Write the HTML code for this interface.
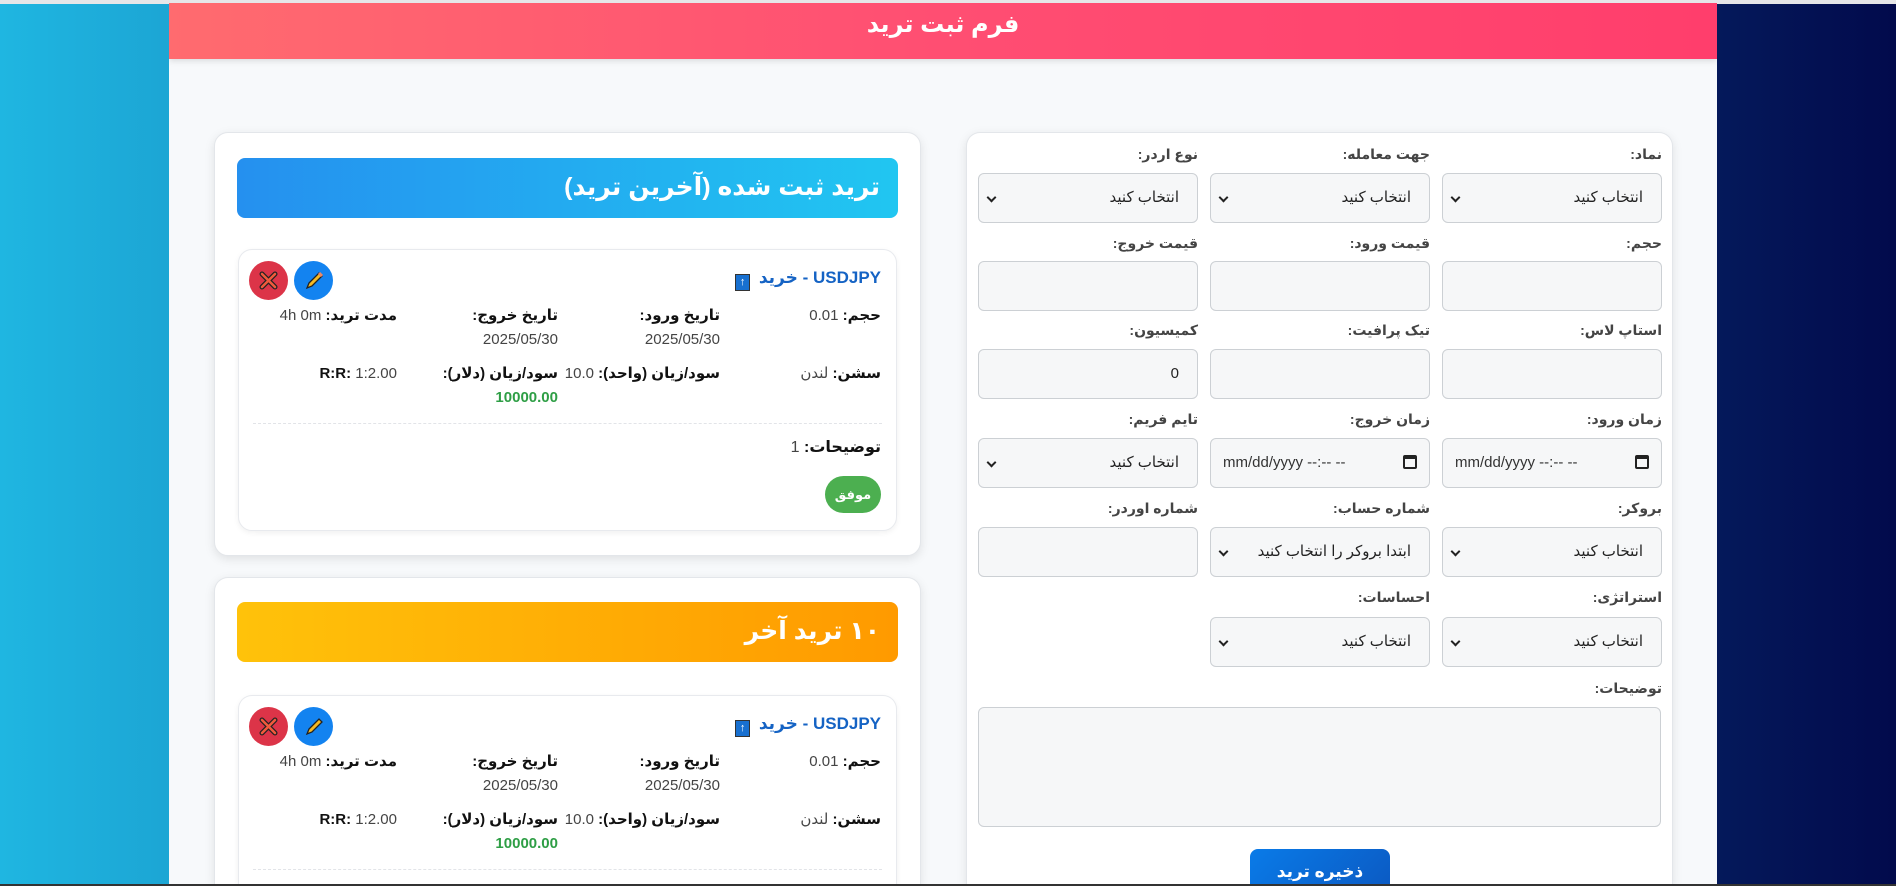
<!DOCTYPE html>
<html><head><meta charset="utf-8">
<style>
*{box-sizing:border-box;margin:0;padding:0}
html{width:1896px;height:886px;overflow:hidden}
body{width:1896px;height:886px;overflow:hidden;position:relative;background:linear-gradient(90deg,#1fb6e1 0%,#0f5a99 50%,#020a4c 100%);font-family:"Liberation Sans","DejaVu Sans",sans-serif;color:#333}
.top{position:absolute;left:0;top:0;width:1896px;height:4px;background:#e6e6e8}
.main{position:absolute;left:169px;top:3px;width:1548px;height:881px;background:#f7f9fb;overflow:hidden}
.hdr{position:absolute;left:0;top:0;width:1548px;height:56px;background:linear-gradient(90deg,#ff6b6f,#ff4e72,#ff3e6c);box-shadow:0 2px 6px rgba(0,0,0,.12);text-align:center;color:#fff;font-weight:bold;font-size:24px;line-height:44px;direction:rtl}
.card{position:absolute;background:#fff;border:1px solid #e3e6ea;border-radius:14px;box-shadow:0 3px 10px rgba(0,0,0,.10);overflow:hidden}
.open{border-bottom:none;border-radius:14px 14px 0 0}
.ch{position:absolute;left:22px;width:661px;height:60px;border-radius:8px;color:#fff;font-weight:bold;font-size:25px;direction:rtl;padding-right:18px;line-height:58px}
.tc{position:absolute;left:23px;width:659px;background:#fff;border:1px solid #e8eaee;border-radius:14px;box-shadow:0 2px 6px rgba(0,0,0,.06);direction:rtl}
.tt{position:absolute;right:15px;top:18px;font-size:17px;font-weight:bold;color:#1563c4}
.tt .ar{display:inline-block;width:15px;height:17px;background:#1870d0;border:1px solid #333;color:#fff;font-size:11px;text-align:center;line-height:15px;margin-right:4px;vertical-align:-2px}
.cell{position:absolute;width:160px;font-size:15px;color:#444;line-height:24px;text-align:right}
.cell b{color:#111}
.g{color:#2e9e45;font-weight:bold}
.btn{position:absolute;top:11px;width:39px;height:39px;border-radius:50%}
.dash{position:absolute;left:14px;right:14px;border-top:1px dashed #e2e4e8}
.badge{position:absolute;right:15px;width:56px;height:37px;border-radius:19px;background:#4caf50;color:#fff;font-weight:bold;font-size:13px;text-align:center;line-height:37px}
.lbl{position:absolute;width:220px;text-align:right;direction:rtl;font-size:14px;font-weight:bold;color:#444}
.inp{position:absolute;width:220px;height:50px;background:#f6f7f8;border:1px solid #ccd0d4;border-radius:6px;direction:rtl;font-size:15px;color:#222;line-height:48px;padding-right:18px}
.sel::after{content:"";position:absolute;left:9px;top:20px;width:5px;height:5px;border-right:2px solid #222;border-bottom:2px solid #222;transform:rotate(45deg)}
.dt{direction:ltr;text-align:left;padding-left:12px;color:#333}
.dt i{position:absolute;right:12px;top:16px;width:14px;height:14px;border:2px solid #222;border-radius:2px;border-top-width:4px}
</style></head><body>
<div class="top"></div>
<div class="main">
<div class="hdr">فرم ثبت ترید</div>

<div class="card" style="left:45px;top:129px;width:707px;height:424px">
 <div class="ch" style="top:25px;background:linear-gradient(90deg,#2590ef,#21c6f1)">ترید ثبت شده (آخرین ترید)</div>
 <div class="tc" style="top:116px;height:282px">
  <div class="tt">USDJPY - خرید <span class="ar">↑</span></div>
  <div class="btn" style="left:55px;background:#1383f0"><svg width="39" height="39"><path d="M13 27 L15 22 L25 12 L28 15 L18 25 Z" fill="#f5b922" stroke="#222" stroke-width="1.3"/><path d="M25 12 L28 15" stroke="#e86" stroke-width="3"/></svg></div>
  <div class="btn" style="left:10px;background:#dc3448"><svg width="39" height="39"><path d="M13 13 L26 26 M26 13 L13 26" stroke="#222" stroke-width="5" stroke-linecap="round"/><path d="M13 13 L26 26 M26 13 L13 26" stroke="#f05a3c" stroke-width="2.6" stroke-linecap="round"/></svg></div>
  <div class="cell" style="right:15px;top:54px"><b>حجم:</b> 0.01</div>
  <div class="cell" style="right:176px;top:54px"><b>تاریخ ورود:</b><br>2025/05/30</div>
  <div class="cell" style="right:338px;top:54px"><b>تاریخ خروج:</b><br>2025/05/30</div>
  <div class="cell" style="right:499px;top:54px"><b>مدت ترید:</b> 4h 0m</div>
  <div class="cell" style="right:15px;top:112px"><b>سشن:</b> لندن</div>
  <div class="cell" style="right:176px;top:112px"><b>سود/زیان (واحد):</b> 10.0</div>
  <div class="cell" style="right:338px;top:112px"><b>سود/زیان (دلار):</b><br><span class="g">10000.00</span></div>
  <div class="cell" style="right:499px;top:112px"><b>R:R:</b> 1:2.00</div>
  <div class="dash" style="top:173px"></div>
  <div class="cell" style="right:15px;top:186px;font-size:16px;width:200px"><b>توضیحات:</b> 1</div>
  <div class="badge" style="top:226px">موفق</div>
 </div>
</div>

<div class="card open" style="left:45px;top:574px;width:707px;height:307px">
 <div class="ch" style="top:24px;background:linear-gradient(90deg,#ffc20a,#ff9a00)">۱۰ ترید آخر</div>
 <div class="tc" style="top:117px;height:190px;border-bottom:none;border-radius:14px 14px 0 0">
  <div class="tt">USDJPY - خرید <span class="ar">↑</span></div>
  <div class="btn" style="left:55px;background:#1383f0"><svg width="39" height="39"><path d="M13 27 L15 22 L25 12 L28 15 L18 25 Z" fill="#f5b922" stroke="#222" stroke-width="1.3"/></svg></div>
  <div class="btn" style="left:10px;background:#dc3448"><svg width="39" height="39"><path d="M13 13 L26 26 M26 13 L13 26" stroke="#222" stroke-width="5" stroke-linecap="round"/><path d="M13 13 L26 26 M26 13 L13 26" stroke="#f05a3c" stroke-width="2.6" stroke-linecap="round"/></svg></div>
  <div class="cell" style="right:15px;top:54px"><b>حجم:</b> 0.01</div>
  <div class="cell" style="right:176px;top:54px"><b>تاریخ ورود:</b><br>2025/05/30</div>
  <div class="cell" style="right:338px;top:54px"><b>تاریخ خروج:</b><br>2025/05/30</div>
  <div class="cell" style="right:499px;top:54px"><b>مدت ترید:</b> 4h 0m</div>
  <div class="cell" style="right:15px;top:112px"><b>سشن:</b> لندن</div>
  <div class="cell" style="right:176px;top:112px"><b>سود/زیان (واحد):</b> 10.0</div>
  <div class="cell" style="right:338px;top:112px"><b>سود/زیان (دلار):</b><br><span class="g">10000.00</span></div>
  <div class="cell" style="right:499px;top:112px"><b>R:R:</b> 1:2.00</div>
  <div class="dash" style="top:173px"></div>
 </div>
</div>

<div class="card open" style="left:797px;top:129px;width:707px;height:752px"></div>
</div>

<div class="lbl" style="left:1442px;top:146px">نماد:</div>
<div class="lbl" style="left:1210px;top:146px">جهت معامله:</div>
<div class="lbl" style="left:978px;top:146px">نوع اردر:</div>
<div class="inp sel" style="left:1442px;top:173px">انتخاب کنید</div>
<div class="inp sel" style="left:1210px;top:173px">انتخاب کنید</div>
<div class="inp sel" style="left:978px;top:173px">انتخاب کنید</div>

<div class="lbl" style="left:1442px;top:235px">حجم:</div>
<div class="lbl" style="left:1210px;top:235px">قیمت ورود:</div>
<div class="lbl" style="left:978px;top:235px">قیمت خروج:</div>
<div class="inp" style="left:1442px;top:261px"></div>
<div class="inp" style="left:1210px;top:261px"></div>
<div class="inp" style="left:978px;top:261px"></div>

<div class="lbl" style="left:1442px;top:322px">استاپ لاس:</div>
<div class="lbl" style="left:1210px;top:322px">تیک پرافیت:</div>
<div class="lbl" style="left:978px;top:322px">کمیسیون:</div>
<div class="inp" style="left:1442px;top:349px"></div>
<div class="inp" style="left:1210px;top:349px"></div>
<div class="inp" style="left:978px;top:349px">0</div>

<div class="lbl" style="left:1442px;top:411px">زمان ورود:</div>
<div class="lbl" style="left:1210px;top:411px">زمان خروج:</div>
<div class="lbl" style="left:978px;top:411px">تایم فریم:</div>
<div class="inp dt" style="left:1442px;top:438px">mm/dd/yyyy --:-- --<i></i></div>
<div class="inp dt" style="left:1210px;top:438px">mm/dd/yyyy --:-- --<i></i></div>
<div class="inp sel" style="left:978px;top:438px">انتخاب کنید</div>

<div class="lbl" style="left:1442px;top:500px">بروکر:</div>
<div class="lbl" style="left:1210px;top:500px">شماره حساب:</div>
<div class="lbl" style="left:978px;top:500px">شماره اوردر:</div>
<div class="inp sel" style="left:1442px;top:527px">انتخاب کنید</div>
<div class="inp sel" style="left:1210px;top:527px">ابتدا بروکر را انتخاب کنید</div>
<div class="inp" style="left:978px;top:527px"></div>

<div class="lbl" style="left:1442px;top:589px">استراتژی:</div>
<div class="lbl" style="left:1210px;top:589px">احساسات:</div>
<div class="inp sel" style="left:1442px;top:617px">انتخاب کنید</div>
<div class="inp sel" style="left:1210px;top:617px">انتخاب کنید</div>

<div class="lbl" style="left:1442px;top:680px">توضیحات:</div>
<div class="inp" style="left:978px;top:707px;width:683px;height:120px"></div>

<div style="position:absolute;left:1250px;top:849px;width:140px;height:35px;border-radius:8px 8px 0 0;background:linear-gradient(135deg,#0a7be8,#0b5bc4);color:#fff;font-weight:bold;font-size:17px;text-align:center;line-height:46px;direction:rtl;overflow:hidden">ذخیره ترید</div>
<div style="position:absolute;left:0;top:884px;width:1896px;height:2px;background:#333"></div>
</body></html>
